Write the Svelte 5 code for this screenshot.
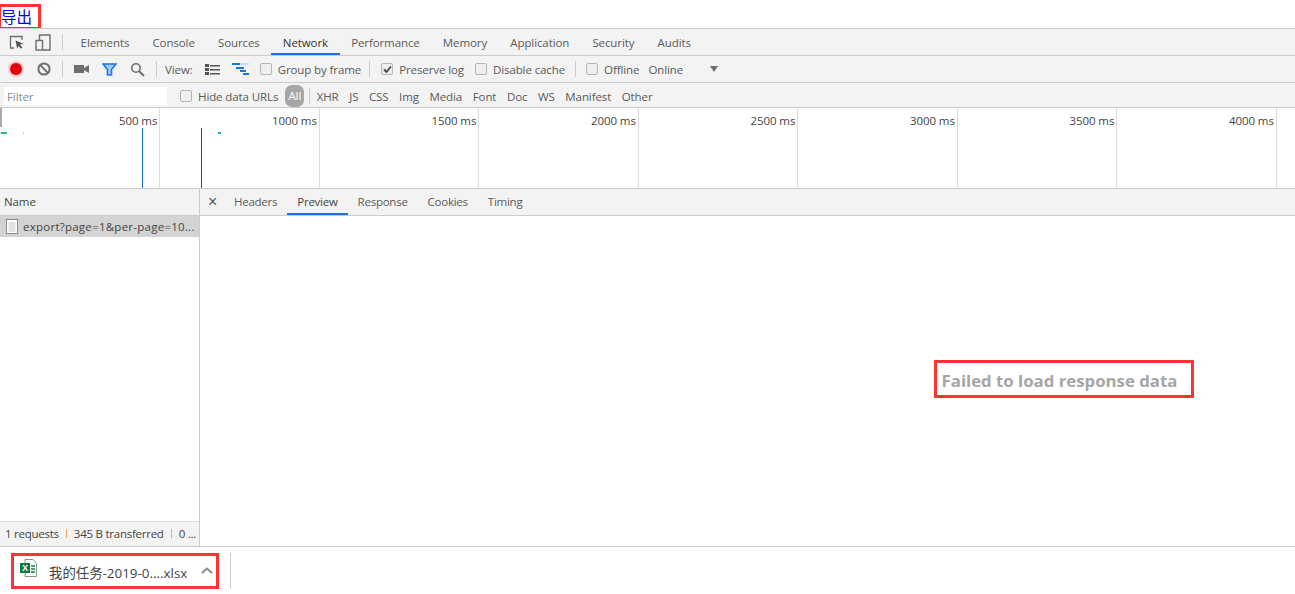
<script>
  const tabs = [['Elements',false],['Console',false],['Sources',false],['Network',true],['Performance',false],['Memory',false],['Application',false],['Security',false],['Audits',false]];
  const types = ['XHR','JS','CSS','Img','Media','Font','Doc','WS','Manifest','Other'];
  const ticks = ['500 ms','1000 ms','1500 ms','2000 ms','2500 ms','3000 ms','3500 ms','4000 ms'];
  const details = [['Headers',false],['Preview',true],['Response',false],['Cookies',false],['Timing',false]];
</script>

<div class="page">
  <div class="top"><span class="link">导出</span><span class="box exportbox"></span></div>

  <div class="bar tabsbar">
    <svg class="ic ic-a" width="16" height="16" viewBox="0 0 16 16"><path d="M13 5V1.500H1.500V13H5" fill="none" stroke="#6e6e6e" stroke-width="1.300"/><path d="M6.500 5.500l7.500 3-3 1.200 2.400 2.800-1.400 1.200-2.400-2.800-1.400 2.800z" fill="#555"/></svg>
    <svg class="ic ic-b" width="16" height="17" viewBox="0 0 16 17"><path d="M4.500 6V1h10.500v15H8" fill="none" stroke="#6e6e6e" stroke-width="1.400"/><rect x="1" y="6.500" width="6.500" height="9.500" fill="none" stroke="#6e6e6e" stroke-width="1.400"/></svg>
    <i class="sep sep-tabs"></i>
    {#each tabs as [t, on]}
      <span class="tab" class:on>{t}</span>
    {/each}
  </div>

  <div class="bar tools">
    <span class="rec"></span>
    <svg class="ic ic-clear" width="14" height="14" viewBox="0 0 14 14"><circle cx="7" cy="7" r="5.600" fill="none" stroke="#6e6e6e" stroke-width="2"/><path d="M3.400 3.400l7.200 7.200" stroke="#6e6e6e" stroke-width="2"/></svg>
    <i class="sep sep-a"></i>
    <svg class="ic ic-cam" width="15" height="10" viewBox="0 0 15 10"><rect x="0" y="1" width="10" height="8" fill="#6e6e6e"/><path d="M10 4l5-3v8l-5-3z" fill="#6e6e6e"/></svg>
    <svg class="ic ic-filter" width="15" height="13" viewBox="0 0 15 13"><path d="M1 1h13L9.500 6.500V12h-4V6.500z" fill="#a6cdf5" stroke="#1a73e8" stroke-width="1.600"/></svg>
    <svg class="ic ic-search" width="15" height="15" viewBox="0 0 15 15"><circle cx="6" cy="6" r="4.200" fill="none" stroke="#6e6e6e" stroke-width="1.600"/><path d="M9 9l5 5" stroke="#6e6e6e" stroke-width="2"/></svg>
    <i class="sep sep-b"></i>
    <span class="lbl view">View:</span>
    <svg class="ic ic-list" width="15" height="11" viewBox="0 0 15 11"><path d="M0 0h4v3H0zM5 1h10v1.500H5zM0 4h4v3H0zM5 5h10v1.500H5zM0 8h4v3H0zM5 9h10v1.500H5z" fill="#555"/></svg>
    <svg class="ic ic-water" width="17" height="13" viewBox="0 0 17 13"><path d="M3 0h14v2H3z" fill="#c6dcf5"/><path d="M0 0h8v2H0zM4 4h8v2H4zM8 7h6v2H8zM11 10h6v2h-6z" fill="#1a73e8"/></svg>
    <label class="chk c-group"><span class="cb"></span>Group by frame</label>
    <i class="sep sep-c"></i>
    <label class="chk c-pres"><span class="cb checked"><svg width="9" height="9" viewBox="0 0 9 9"><path d="M1 4.500l2.500 2.500L8 1.500" fill="none" stroke="#444" stroke-width="1.800"/></svg></span>Preserve log</label>
    <label class="chk c-dis"><span class="cb"></span>Disable cache</label>
    <i class="sep sep-d"></i>
    <label class="chk c-off"><span class="cb"></span>Offline</label>
    <span class="lbl online">Online</span>
    <span class="tri"></span>
  </div>

  <div class="bar filter">
    <span class="input">Filter</span>
    <label class="chk c-hide"><span class="cb"></span>Hide data URLs</label>
    <span class="all">All</span>
    <i class="sep sep-e"></i>
    {#each types as t}<span class="type">{t}</span>{/each}
  </div>

  <div class="overview">
    <span class="grip"></span>
    {#each ticks as t}<div class="tick">{t}</div>{/each}
    <i class="mark m1"></i><i class="mark m2"></i><i class="mark m3"></i><i class="mark m4"></i>
    <i class="vline blue"></i><i class="vline red"></i>
  </div>

  <div class="split">
    <div class="left">
      <div class="namehead">Name</div>
      <div class="row">
        <svg width="12" height="15" viewBox="0 0 12 15"><rect x=".5" y=".5" width="11" height="14" fill="#fff" stroke="#8a8a8a"/><path d="M2.500 4h7M2.500 6h7M2.500 8h7M2.500 10h7M2.500 12h7" stroke="#c4c4c4"/></svg>
        <span>export?page=1&amp;per-page=10...</span>
      </div>
      <div class="grow"></div>
      <div class="status">1 requests<i></i>345 B transferred<i class="o"></i>0 ...</div>
    </div>
    <div class="right">
      <div class="dtabs">
        <span class="close">×</span>
        {#each details as [t, on]}<span class="dtab" class:on>{t}</span>{/each}
      </div>
      <div class="body">
        <span class="fail">Failed to load response data<span class="box failbox"></span></span>
      </div>
    </div>
  </div>

  <div class="shelf">
    <div class="dl">
      <svg class="xl" width="17" height="18" viewBox="0 0 17 18">
        <path d="M5 .5h8l3.500 4v13H5z" fill="#fff" stroke="#7d9c8a"/>
        <rect x="0" y="4" width="10" height="10" fill="#107c41"/>
        <path d="M11 7h4M11 10h4M11 13h4" stroke="#107c41" stroke-width="1.400"/>
        <text x="5" y="12" font-size="8.500" font-weight="700" fill="#fff" text-anchor="middle" font-family="Liberation Sans">X</text>
      </svg>
      <span class="fname">我的任务-2019-0....xlsx</span>
      <svg class="chev" width="12" height="7" viewBox="0 0 12 7"><path d="M1 6l5-4.500L11 6" fill="none" stroke="#8a8a8a" stroke-width="2"/></svg>
      <span class="box dlbox"></span>
    </div>
    <i class="shelfsep"></i>
  </div>
</div>

<style>
  :global(body) { margin: 0; background: #fff; }
  .page { width: 1295px; height: 594px; overflow: hidden; display: flex; flex-direction: column; font: 11.500px "Open Sans", "Noto Sans", "Noto Sans CJK SC", sans-serif; color: #5a5a5a; letter-spacing: -0.1px; }
  .box { position: absolute; border: 3px solid #f33; box-sizing: border-box; pointer-events: none; }

  .top { position: relative; height: 28px; flex: none; overflow: hidden; }
  .link { position: absolute; left: 1px; top: 5px; font: 15.500px/22px "Noto Sans CJK SC", sans-serif; color: #00e; letter-spacing: 0; z-index: 1; }
  .exportbox { left: -2px; top: 4px; width: 43px; height: 26px; }

  .bar { display: flex; align-items: center; flex: none; background: #f3f3f3; border-bottom: 1px solid #ccc; box-sizing: border-box; }
  .sep { display: block; width: 1px; height: 16px; background: #ccc; flex: none; }
  .ic { flex: none; display: block; }

  .tabsbar { height: 28px; border-top: 1px solid #ccc; align-items: stretch; }
  .ic-a { margin: 6px 0 0 9px; }
  .ic-b { margin: 5px 0 0 10px; }
  .sep-tabs { margin: 5px 6px 0 11px; }
  .tab { padding: 0 11.600px; line-height: 27px; white-space: nowrap; }
  .tab.on { color: #333; box-shadow: inset 0 -2px 0 #1a73e8; }

  .tools { height: 27px; }
  .rec { width: 12px; height: 12px; border-radius: 50%; background: #e0000f; box-shadow: 0 0 0 2px #f6c9c9; margin-left: 10px; flex: none; }
  .ic-clear { margin-left: 15px; }
  .sep-a { margin: 0 11px 0 11px; }
  .ic-filter { margin-left: 13px; }
  .ic-search { margin-left: 13px; }
  .sep-b { margin: 0 8px 0 11px; }
  .lbl { white-space: nowrap; }
  .ic-list { margin-left: 12px; }
  .ic-water { margin-left: 12px; }
  .chk { display: flex; align-items: center; white-space: nowrap; flex: none; }
  .cb { width: 12px; height: 12px; box-sizing: border-box; border: 1px solid #b5b5b5; border-radius: 2px; background: #efefef; margin-right: 6px; display: flex; align-items: center; justify-content: center; flex: none; }
  .c-group { margin-left: 11px; }
  .sep-c { margin: 0 11px 0 8px; }
  .c-dis { margin-left: 11px; }
  .sep-d { margin: 0 10px 0 10px; }
  .online { margin-left: 9px; }
  .tri { width: 0; height: 0; border: 4px solid transparent; border-top: 6px solid #6e6e6e; border-bottom: 0; margin-left: 27px; }

  .filter { height: 25px; padding-top: 2px; }
  .input { width: 163px; height: 18px; margin-left: 4px; padding-left: 3px; box-sizing: border-box; background: #fff; color: #8a8a8a; line-height: 19px; flex: none; }
  .c-hide { margin-left: 13px; }
  .all { width: 19px; height: 22px; border-radius: 7px; background: #a6a6a6; color: #fff; text-align: center; line-height: 22px; margin-left: 7px; flex: none; }
  .sep-e { margin: 0 1px 0 5px; }
  .type { margin: 0 5.300px; white-space: nowrap; }

  .overview { position: relative; height: 81px; flex: none; display: flex; border-bottom: 1px solid #ccc; box-sizing: border-box; padding-left: 0.800px; }
  .tick { width: 159.500px; flex: none; box-sizing: border-box; border-right: 1px solid #ddd; text-align: right; padding: 5px 2px 0 0; white-space: nowrap; color: #444; }
  .grip { position: absolute; left: 0; top: 0; width: 2px; height: 19px; background: #aaa; }
  .mark { position: absolute; height: 2px; top: 24px; }
  .m1 { left: 1px; width: 6px; background: #1abc9c; }
  .m2 { left: 23px; width: 1px; background: #ccc; }
  .m3 { left: 218px; width: 3px; background: #26a5c9; }
  .m4 { left: 0; width: 1px; background: #ddd; }
  .vline { position: absolute; top: 20px; bottom: 0; width: 1px; }
  .blue { left: 142px; background: #1a6fd0; }
  .red { left: 201px; background: #a01c1c; }

  .split { flex: 1; display: flex; min-height: 0; border-bottom: 1px solid #ccc; }
  .left { width: 199px; flex: none; display: flex; flex-direction: column; border-right: 1px solid #ccc; }
  .namehead { height: 27px; flex: none; box-sizing: border-box; background: #f3f3f3; border-bottom: 1px solid #ccc; padding-left: 4px; line-height: 26px; color: #444; }
  .row { height: 21px; flex: none; background: #d3d3d3; display: flex; align-items: center; gap: 5px; padding-left: 6px; white-space: nowrap; color: #444; letter-spacing: 0.25px; }
  .grow { flex: 1; }
  .status { height: 25px; flex: none; box-sizing: border-box; background: #f3f3f3; border-top: 1px solid #ddd; padding: 0 0 2px 5px; white-space: nowrap; color: #444; display: flex; align-items: center; letter-spacing: -0.25px; }
  .status i { display: block; flex: none; width: 1px; height: 9px; background: #e6a860; margin: 0 7px; }
  .right { flex: 1; display: flex; flex-direction: column; min-width: 0; }
  .dtabs { height: 27px; flex: none; box-sizing: border-box; display: flex; background: #f3f3f3; border-bottom: 1px solid #ccc; letter-spacing: -0.25px; }
  .close { width: 23px; margin-left: 1px; text-align: center; font: 16px/25px "Liberation Sans", sans-serif; color: #555; flex: none; }
  .dtab { padding: 0 10px; line-height: 26px; white-space: nowrap; }
  .dtab.on { color: #444; box-shadow: inset 0 -2px 0 #1a73e8; }
  .body { flex: 1; display: flex; align-items: center; justify-content: center; padding: 0 0 2px 624px; }
  .fail { position: relative; font-size: 16.800px; font-weight: 700; color: #a6a6a6; white-space: nowrap; letter-spacing: 0; }
  .failbox { left: -8px; right: -17px; top: -9px; bottom: -6px; }

  .shelf { height: 47px; flex: none; display: flex; align-items: center; }
  .dl { position: relative; width: 208px; height: 36px; margin: 0 0 0 11px; display: flex; align-items: center; flex: none; box-sizing: border-box; }
  .xl { margin: -6px 0 0 9px; flex: none; }
  .fname { margin: 3px 0 0 12px; color: #444; white-space: nowrap; font-size: 13.400px; letter-spacing: 0; }
  .chev { margin: -1px 0 0 14px; flex: none; }
  .dlbox { inset: 0; }
  .shelfsep { display: block; width: 1px; height: 36px; background: #ccc; margin-left: 11px; }
</style>
